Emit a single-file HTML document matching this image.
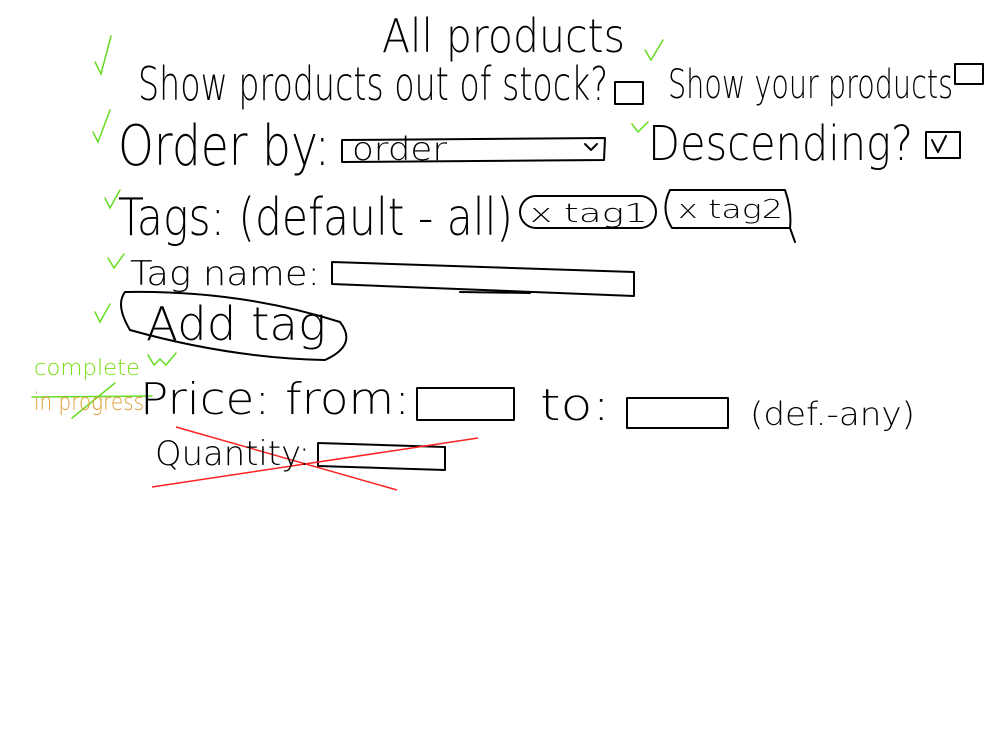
<!DOCTYPE html>
<html><head><meta charset="utf-8"><style>
html,body{margin:0;padding:0;background:#fff;width:1000px;height:750px;overflow:hidden}
svg text{font-family:"DejaVu Sans","Liberation Sans",sans-serif;font-weight:200;fill:#000}
</style></head><body>
<svg width="1000" height="750" viewBox="0 0 1000 750" xmlns="http://www.w3.org/2000/svg">
<g fill="none" stroke="#000" stroke-width="2" stroke-linecap="round" stroke-linejoin="round">
<rect x="615" y="82" width="28" height="22"/>
<rect x="955" y="64" width="28" height="20"/>
<path d="M342 140 L605 138 L604 160 L342 162 Z"/>
<path d="M585 144 l6 6 l6 -6"/>
<rect x="926" y="132" width="34" height="26"/>
<path d="M932 140 l6 12 l8 -16"/>
<rect x="520" y="196" width="136" height="32" rx="16"/>
<path d="M670 190 L785 190 Q792 210 790 228 L672 228 Q660 210 670 190 Z M790 228 L795 242"/>
<path d="M332 262 L634 272 L634 296 L332 284 Z M460 292 L530 293"/>
<path d="M125 292 Q240 290 340 322 Q358 345 325 360 Q230 358 130 330 Q115 305 125 292 Z"/>
<path d="M417 388 L514 388 L514 420 L417 420 Z"/>
<path d="M627 398 L728 398 L728 428 L627 428 Z"/>
<path d="M318 443 L445 447 L445 470 L318 466 Z"/>
</g>
<g fill="none" stroke="#66dd22" stroke-width="1.5" stroke-linecap="round">
<path d="M95 62 l6 12 l10 -38"/>
<path d="M645 50 l6 10 l12 -20"/>
<path d="M93 132 l5 10 l12 -32"/>
<path d="M632 124 l6 8 l10 -10"/>
<path d="M105 198 l5 10 l10 -18"/>
<path d="M108 258 l6 10 l10 -14"/>
<path d="M95 312 l5 10 l10 -18"/>
<path d="M148 355 l6 10 l6 -6 l6 6 l10 -12"/>
<path d="M32 397 L152 396 M72 418 L115 383"/>
</g>
<g stroke="#ff2222" stroke-width="1.5">
<path d="M152 487 L478 438"/><path d="M176 427 L397 490"/>
</g>
<text x="382" y="52" font-size="46" textLength="243" lengthAdjust="spacingAndGlyphs">All products</text>
<text x="138" y="100" font-size="46" textLength="470" lengthAdjust="spacingAndGlyphs">Show products out of stock?</text>
<text x="668" y="98" font-size="40" textLength="285" lengthAdjust="spacingAndGlyphs">Show your products</text>
<text x="118" y="165" font-size="56" textLength="212" lengthAdjust="spacingAndGlyphs">Order by:</text>
<text x="352" y="160" font-size="32" textLength="95" lengthAdjust="spacingAndGlyphs">order</text>
<text x="648" y="160" font-size="48" textLength="265" lengthAdjust="spacingAndGlyphs">Descending?</text>
<text x="118" y="235" font-size="52" textLength="395" lengthAdjust="spacingAndGlyphs">Tags: (default - all)</text>
<text x="530" y="222" font-size="26" textLength="118" lengthAdjust="spacingAndGlyphs">x tag1</text>
<text x="678" y="218" font-size="26" textLength="105" lengthAdjust="spacingAndGlyphs">x tag2</text>
<text x="130" y="285" font-size="34" textLength="190" lengthAdjust="spacingAndGlyphs">Tag name:</text>
<text x="146" y="340" font-size="46" textLength="180" lengthAdjust="spacingAndGlyphs">Add tag</text>
<text x="34" y="375" font-size="22" style="fill:#77dd11" textLength="106" lengthAdjust="spacingAndGlyphs">complete</text>
<text x="34" y="410" font-size="24" style="fill:#e09a30" textLength="110" lengthAdjust="spacingAndGlyphs">in progress</text>
<text x="140" y="414" font-size="44" textLength="270" lengthAdjust="spacingAndGlyphs">Price: from:</text>
<text x="540" y="420" font-size="44" textLength="70" lengthAdjust="spacingAndGlyphs">to:</text>
<text x="750" y="425" font-size="32" textLength="165" lengthAdjust="spacingAndGlyphs">(def.-any)</text>
<text x="155" y="465" font-size="34" textLength="155" lengthAdjust="spacingAndGlyphs">Quantity:</text>
</svg>
</body></html>
